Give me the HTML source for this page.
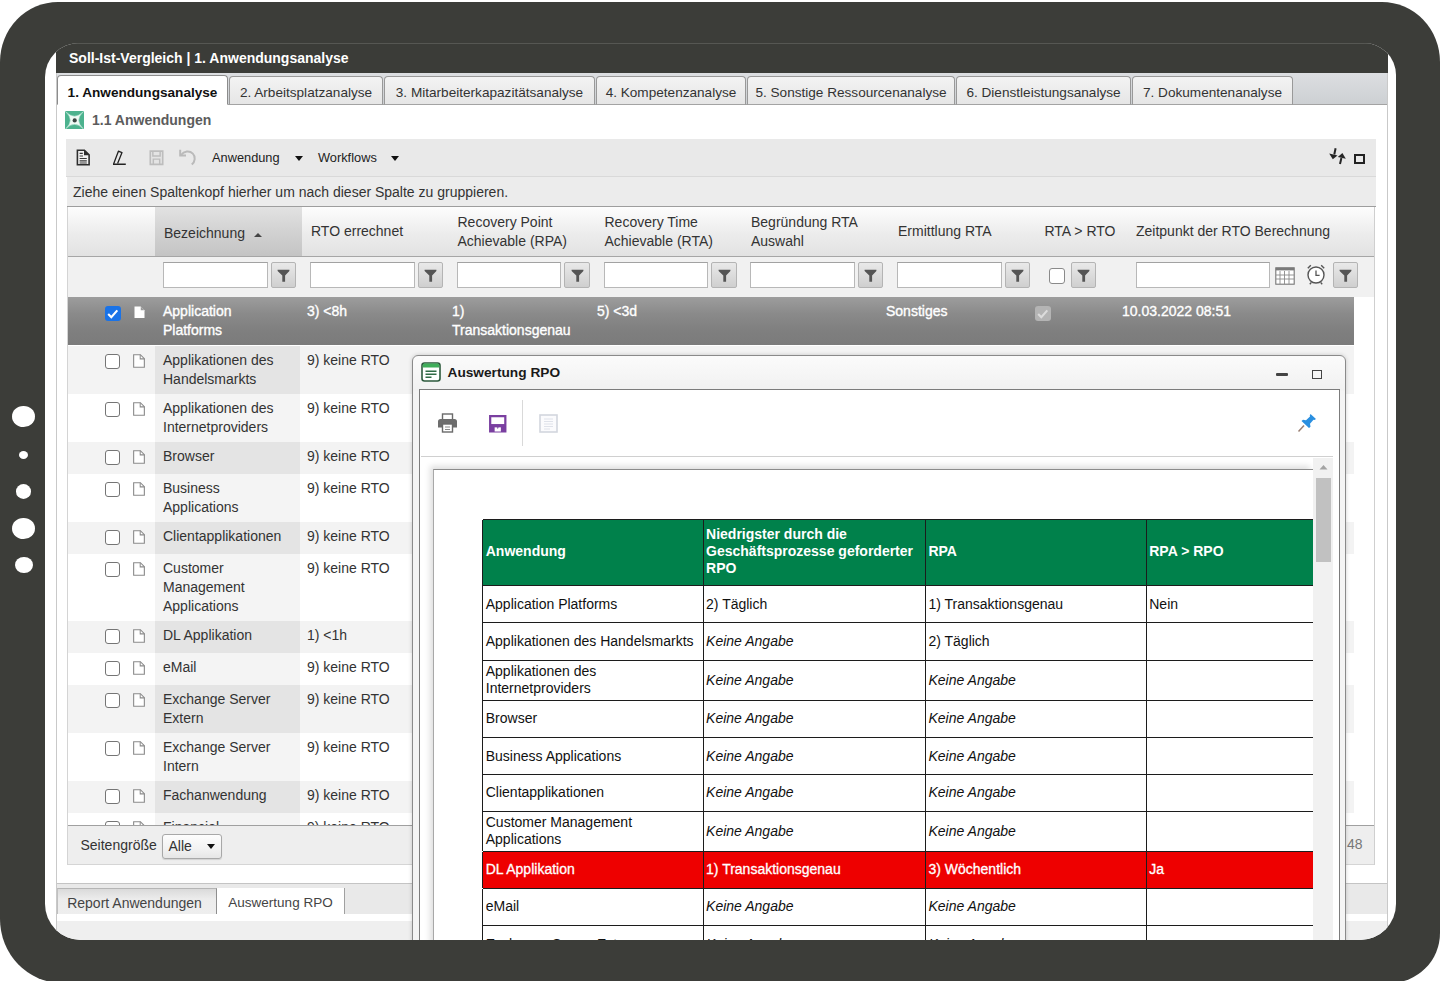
<!DOCTYPE html>
<html>
<head>
<meta charset="utf-8">
<title>Soll-Ist-Vergleich</title>
<style>
*{box-sizing:border-box;margin:0;padding:0}
html,body{width:1440px;height:981px;overflow:hidden;background:#fff}
body{font-family:"Liberation Sans",sans-serif;font-size:14px;color:#333;position:relative}
.abs{position:absolute}
.frame{position:absolute;left:0;top:2px;width:1440px;height:981px;background:#3c3d39;border-radius:58px 58px 50px 62px / 60px 60px 50px 64px}
.dot{position:absolute;background:#fff;border-radius:50%}
.screen{position:absolute;left:45px;top:43px;width:1351px;height:896.500px;background:#fff;border-radius:34px 32px 36px 36px;overflow:hidden}
.in{position:absolute;left:-45px;top:-43px;width:1440px;height:981px}
.titlebar{left:56px;top:43px;width:1332px;height:30px;background:#3b3c38;border-top:1px solid #565753;color:#fff;font-weight:bold;font-size:14px;line-height:29px;padding-left:13px;white-space:nowrap}
.tabstrip{left:56px;top:73px;width:1332px;height:32px;background:linear-gradient(#dcdee1,#cdd0d3);border-bottom:1px solid #a3a3a3}
.tab{position:absolute;top:76px;height:29px;border:1px solid #999;border-bottom:1px solid #a3a3a3;border-radius:4px 4px 0 0;background:linear-gradient(#f3f3f3,#e6e6e6);font-size:13.6px;line-height:32px;text-align:center;color:#333;white-space:nowrap;letter-spacing:0}
.tab.act{top:75px;height:30px;line-height:34px;background:#fff;border-color:#8c8c8c;border-bottom:1px solid #fff;font-weight:bold;color:#111}

.sechead{left:92px;top:110px;font-size:14px;font-weight:bold;color:#5c5c5c;line-height:20px;white-space:nowrap}
.toolbar{left:66px;top:139px;width:1310px;height:38px;background:#e9e9e9;border-bottom:1px solid #d9d9d9}
.tbtxt{top:149px;font-size:12.8px;line-height:18px;color:#222;white-space:nowrap}
.caret{width:0;height:0;border-left:4.5px solid transparent;border-right:4.5px solid transparent;border-top:5px solid #111}
.grouppanel{left:67px;top:177px;width:1309px;height:30px;background:#ececec;border-bottom:1px solid #9e9e9e;font-size:14px;line-height:30px;color:#333;padding-left:6px;white-space:nowrap}
.ghead{left:67px;top:207px;width:1307px;height:50px;background:linear-gradient(#fdfdfd,#ececec 55%,#e2e2e2);border-bottom:1px solid #a6a6a6}
.gsorted{left:155px;top:207px;width:147px;height:49px;background:linear-gradient(#e2e2e2,#d2d2d2 50%,#c4c4c4)}
.hc{position:absolute;font-size:14px;line-height:19px;color:#333;white-space:nowrap}
.gfilter{left:67px;top:257px;width:1307px;height:40px;background:#f1f1f1}
.fin{position:absolute;top:262px;height:26px;width:104.5px;background:#fff;border:1px solid #b8b8b8;border-top-color:#a2a2a2}
.fbtn{position:absolute;top:262px;height:25.5px;width:25.5px;background:linear-gradient(#e9e9e9,#cfcfcf);border:1px solid #b4b4b4;border-radius:2px}
.fbtn svg{position:absolute;left:5.5px;top:6px}

.row{position:absolute;left:67px;width:1287px}
.row.alt{background:#f3f3f3}
.row .sc{position:absolute;left:88px;top:0;bottom:0;width:145px;background:rgba(0,0,0,0.045)}
.row.alt .sc{background:rgba(0,0,0,0.06)}
.ct{position:absolute;top:5px;font-size:14px;line-height:19px;color:#333;white-space:nowrap}
.cb{position:absolute;left:38px;top:8px;width:15px;height:15px;background:#fff;border:1.500px solid #757575;border-radius:3px}
.di{position:absolute;left:66px;top:8px}
.row.sel{background:linear-gradient(#9d9d9d,#8a8a8a 35%,#7f7f7f 70%,#7b7b7b)}
.row.sel .ct{color:#fff;-webkit-text-stroke:0.35px #fff}
.pager{left:67px;top:825px;width:1307px;height:40px;background:#eeeeee;border-top:1.500px solid #a0a0a0;border-bottom:1px solid #d5d5d5}
.btabs{left:56px;top:883px;width:1332px;height:35px;background:#e9e9e9;border-top:1px solid #c4c4c4}
.btab{position:absolute;top:888px;height:26px;font-size:14px;line-height:29px;color:#444;text-align:center;white-space:nowrap}

.popup{left:411.700px;top:355px;width:934.800px;height:620px;background:linear-gradient(#fbfbfb,#f1f1f1 34px,#f4f4f4 35px);border:1.500px solid #8a8a8a;border-radius:6px 6px 0 0;box-shadow:0 0 4px rgba(0,0,0,0.18)}
.pinner{left:418.800px;top:388.500px;width:921.200px;height:580px;background:#fff;border:1.500px solid #7c7c7c}
.ptitle{left:447.500px;top:362.5px;font-size:13.7px;font-weight:bold;color:#1a1a1a;line-height:20px;white-space:nowrap}
.rt{position:absolute;left:483px;width:829.700px;font-size:14px;line-height:16.800px;color:#111}
.rr{position:absolute;left:0;width:100%;border-top:1.500px solid #1c1c1c}
.rc{position:absolute;top:0;bottom:0;border-left:1.500px solid #1c1c1c;display:flex;align-items:center;padding-left:2.500px;padding-bottom:1px;white-space:nowrap}
.rhead .rc{padding-bottom:3px}
.rc i{font-style:italic}
.rhead{background:#00814b;color:#fff;font-weight:bold}
.rred{background:#ee0000;color:#fff}
.rred .rc{-webkit-text-stroke:0.300px #fff}
</style>
</head>
<body>
<div class="frame"></div>
<div class="dot" style="left:12px;top:405.5px;width:23px;height:21.5px"></div>
<div class="dot" style="left:18.5px;top:450.5px;width:9px;height:8px"></div>
<div class="dot" style="left:15.5px;top:483.5px;width:15.5px;height:15px"></div>
<div class="dot" style="left:12px;top:517.5px;width:23px;height:21.5px"></div>
<div class="dot" style="left:15px;top:556.5px;width:18px;height:16.5px"></div>
<div class="screen"><div class="in">

<div class="abs titlebar">Soll-Ist-Vergleich | 1. Anwendungsanalyse</div>
<div class="abs tabstrip"></div>
<div class="tab act" style="left:57px;width:171px">1. Anwendungsanalyse</div>
<div class="tab" style="left:229px;width:154px">2. Arbeitsplatzanalyse</div>
<div class="tab" style="left:384px;width:211px">3. Mitarbeiterkapazitätsanalyse</div>
<div class="tab" style="left:596px;width:150px">4. Kompetenzanalyse</div>
<div class="tab" style="left:747px;width:208px">5. Sonstige Ressourcenanalyse</div>
<div class="tab" style="left:956px;width:175px">6. Dienstleistungsanalyse</div>
<div class="tab" style="left:1132px;width:161px">7. Dokumentenanalyse</div>

<svg class="abs" style="left:65px;top:110.500px" width="19" height="18.500" viewBox="0 0 19 18.500"><rect width="19" height="18.500" rx="1.200" fill="#4cb28e"/><path d="M0.800 0.800 Q9.500 9.600 18.200 0.800 Q9.200 9.250 18.200 17.700 Q9.500 8.900 0.800 17.700 Q9.800 9.250 0.800 0.800z" fill="#effaf5" stroke="#bfe8d8" stroke-width="0.600"/><circle cx="9.700" cy="9.400" r="2.100" fill="#3a4642"/></svg>
<div class="abs sechead">1.1 Anwendungen</div>
<div class="abs toolbar"></div>
<svg class="abs" style="left:76px;top:149px" width="15" height="17" viewBox="0 0 15 17"><path d="M1.400 1.200h7l4.700 4.600v10h-11.700z" fill="#f2f2f2" stroke="#2e2e2e" stroke-width="1.600"/><path d="M8 1v5.200h5.200z" fill="#2e2e2e"/><path d="M3.600 4.300h3.200M3.600 7h3.400M3.600 9.500h7.200M3.600 11.800h7.200M3.600 14h7.200" stroke="#3a3a3a" stroke-width="1.200"/></svg>
<svg class="abs" style="left:111px;top:149px" width="16" height="17" viewBox="0 0 16 17"><path d="M2 15.300h12.800" stroke="#222" stroke-width="1.500"/><path d="M2.600 15l4.800-12.800 3.600 1.400-4.400 11" fill="none" stroke="#222" stroke-width="1.300" stroke-linejoin="round"/></svg>
<svg class="abs" style="left:149.300px;top:150px" width="15" height="15.500" viewBox="0 0 16 17"><path d="M1.200 1.200h13.600v14.600h-13.600z" fill="#e4e4e4" stroke="#bdbdbd" stroke-width="1.800"/><path d="M4 1.500v5h8v-5M4.500 15.500v-5.500h7v5.500" fill="none" stroke="#bdbdbd" stroke-width="1.600"/></svg>
<svg class="abs" style="left:178px;top:148px" width="19" height="18" viewBox="0 0 19 18"><path d="M2.200 1.800v5.800h5.800" fill="none" stroke="#bababa" stroke-width="2"/><path d="M3 7c3-4 8.600-4.600 11.800-1.400 3 3 2.400 7.800-1 11" fill="none" stroke="#bababa" stroke-width="2"/></svg>
<div class="abs tbtxt" style="left:212px">Anwendung</div><div class="abs caret" style="left:294.5px;top:155.500px"></div>
<div class="abs tbtxt" style="left:318px">Workflows</div><div class="abs caret" style="left:390.500px;top:155.500px"></div>
<svg class="abs" style="left:1328px;top:147px" width="19" height="18" viewBox="0 0 19 18"><path d="M7.600 1.300L6.300 7.500" stroke="#262626" stroke-width="2"/><path d="M1.200 6.600l8.300 1.800-4.700 3.800z" fill="#262626"/><path d="M12 17l1.400-6" stroke="#262626" stroke-width="2"/><path d="M9.800 10l8 1.700-3.400-5.700z" fill="#262626"/></svg>
<div class="abs" style="left:1354px;top:154px;width:10.500px;height:9.500px;border:2px solid #222;border-top-width:2.500px"></div>
<div class="abs grouppanel">Ziehe einen Spaltenkopf hierher um nach dieser Spalte zu gruppieren.</div>
<div class="abs ghead"></div><div class="abs gsorted"></div>
<div class="hc" style="left:164px;top:223.500px">Bezeichnung</div>
<div class="abs" style="left:253.500px;top:232.500px;width:0;height:0;border-left:4.500px solid transparent;border-right:4.500px solid transparent;border-bottom:4.500px solid #444"></div>
<div class="hc" style="left:311px;top:222px">RTO errechnet</div>
<div class="hc" style="left:457.500px;top:212.500px">Recovery Point<br>Achievable (RPA)</div>
<div class="hc" style="left:604.500px;top:212.500px">Recovery Time<br>Achievable (RTA)</div>
<div class="hc" style="left:751px;top:212.500px">Begründung RTA<br>Auswahl</div>
<div class="hc" style="left:898px;top:222px">Ermittlung RTA</div>
<div class="hc" style="left:1044.500px;top:222px">RTA &gt; RTO</div>
<div class="hc" style="left:1136px;top:222px">Zeitpunkt der RTO Berechnung</div>
<div class="abs gfilter"></div>
<div class="fin" style="left:163.3px"></div><div class="fbtn" style="left:270.8px"><svg width="13" height="13" viewBox="0 0 13 13"><path d="M0.600 0.800h11.800v1.200l-4.300 4.600v6.200h-2.800v-6.200l-4.700-4.600z" fill="#555"/></svg></div>
<div class="fin" style="left:310.1px"></div><div class="fbtn" style="left:417.6px"><svg width="13" height="13" viewBox="0 0 13 13"><path d="M0.600 0.800h11.800v1.200l-4.300 4.600v6.200h-2.800v-6.200l-4.700-4.600z" fill="#555"/></svg></div>
<div class="fin" style="left:456.8px"></div><div class="fbtn" style="left:564.3px"><svg width="13" height="13" viewBox="0 0 13 13"><path d="M0.600 0.800h11.800v1.200l-4.300 4.600v6.200h-2.800v-6.200l-4.700-4.600z" fill="#555"/></svg></div>
<div class="fin" style="left:603.5px"></div><div class="fbtn" style="left:711.0px"><svg width="13" height="13" viewBox="0 0 13 13"><path d="M0.600 0.800h11.800v1.200l-4.300 4.600v6.200h-2.800v-6.200l-4.700-4.600z" fill="#555"/></svg></div>
<div class="fin" style="left:750.3px"></div><div class="fbtn" style="left:857.8px"><svg width="13" height="13" viewBox="0 0 13 13"><path d="M0.600 0.800h11.800v1.200l-4.300 4.600v6.200h-2.800v-6.200l-4.700-4.600z" fill="#555"/></svg></div>
<div class="fin" style="left:897.0px"></div><div class="fbtn" style="left:1004.5px"><svg width="13" height="13" viewBox="0 0 13 13"><path d="M0.600 0.800h11.800v1.200l-4.300 4.600v6.200h-2.800v-6.200l-4.700-4.600z" fill="#555"/></svg></div>
<div class="abs" style="left:1049px;top:268px;width:16px;height:16px;background:#fff;border:1.500px solid #8a8a8a;border-radius:3px"></div>
<div class="fbtn" style="left:1070.500px"><svg width="13" height="13" viewBox="0 0 13 13"><path d="M0.600 0.800h11.800v1.200l-4.300 4.600v6.200h-2.800v-6.200l-4.700-4.600z" fill="#555"/></svg></div>
<div class="fin" style="left:1136px;width:133.500px"></div>
<svg class="abs" style="left:1275px;top:267px" width="20" height="18" viewBox="0 0 20 18"><rect x="0.800" y="0.800" width="18.400" height="16.400" fill="#fff" stroke="#777" stroke-width="1.100"/><rect x="0.800" y="0.800" width="18.400" height="2.600" fill="#7a7a7a"/><path d="M5 4v13M9.500 4v13M14 4v13M1 8h18M1 12h18" stroke="#8a8a8a" stroke-width="0.900"/></svg>
<svg class="abs" style="left:1305px;top:263px" width="22" height="23" viewBox="0 0 22 23"><circle cx="11" cy="12" r="8" fill="#fff" stroke="#555" stroke-width="1.400"/><path d="M11 7.500v4.800h3.600" fill="none" stroke="#555" stroke-width="1.300"/><path d="M2.800 5.200l3-3M19.200 5.200l-3-3M4.800 21.200l1.600-1.800M17.200 21.200l-1.600-1.800" stroke="#555" stroke-width="1.400"/></svg>
<div class="fbtn" style="left:1332.500px"><svg width="13" height="13" viewBox="0 0 13 13"><path d="M0.600 0.800h11.800v1.200l-4.300 4.600v6.200h-2.800v-6.200l-4.700-4.600z" fill="#555"/></svg></div>
<div class="abs" style="left:67px;top:297px;width:1287px;height:528px;overflow:hidden"><div class="abs" style="left:-67px;top:-297px">
<div class="row sel" style="top:297px;height:48px"><div class="abs" style="left:38px;top:8.500px;width:15.500px;height:15.500px;background:#1a73e8;border-radius:3px"><svg width="15.500" height="15.500" viewBox="0 0 16 16" style="display:block"><path d="M3.300 8.300l3.200 3.200 6.200-7" fill="none" stroke="#fff" stroke-width="2.200"/></svg></div><svg class="di" width="11" height="12.500" viewBox="0 0 13 15" style="top:9px;left:66.500px"><path d="M0.500 0.500h7.500l4.500 4.500v9.500h-12z" fill="#fff"/><path d="M8 0.500v4.500h4.500z" fill="#9a9a9a"/></svg>
<div class="ct" style="left:96px">Application<br>Platforms</div><div class="ct" style="left:240px">3) &lt;8h</div><div class="ct" style="left:385px">1)<br>Transaktionsgenau</div><div class="ct" style="left:530px">5) &lt;3d</div><div class="ct" style="left:819px">Sonstiges</div>
<div class="abs" style="left:968px;top:8.500px;width:15.500px;height:15.500px;background:#b4b4b4;border-radius:3px"><svg width="15.500" height="15.500" viewBox="0 0 16 16" style="display:block"><path d="M3.300 8.300l3.200 3.200 6.200-7" fill="none" stroke="#dcdcdc" stroke-width="2.200"/></svg></div>
<div class="ct" style="left:1055px">10.03.2022 08:51</div></div>
<div class="row alt" style="top:346px;height:48px"><div class="sc"></div><div class="cb"></div><svg class="di" width="12" height="14" viewBox="0 0 13 15"><path d="M0.700 0.700h7.300l4.300 4.300v9.300h-11.600z" fill="#fff" stroke="#8a8a8a" stroke-width="1.200"/><path d="M7.800 0.700v4.500h4.500" fill="none" stroke="#8a8a8a" stroke-width="1.100"/></svg><div class="ct" style="left:96px">Applikationen des<br>Handelsmarkts</div><div class="ct" style="left:240px">9) keine RTO</div></div>
<div class="row " style="top:394px;height:48px"><div class="sc"></div><div class="cb"></div><svg class="di" width="12" height="14" viewBox="0 0 13 15"><path d="M0.700 0.700h7.300l4.300 4.300v9.300h-11.600z" fill="#fff" stroke="#8a8a8a" stroke-width="1.200"/><path d="M7.800 0.700v4.500h4.500" fill="none" stroke="#8a8a8a" stroke-width="1.100"/></svg><div class="ct" style="left:96px">Applikationen des<br>Internetproviders</div><div class="ct" style="left:240px">9) keine RTO</div></div>
<div class="row alt" style="top:442px;height:32px"><div class="sc"></div><div class="cb"></div><svg class="di" width="12" height="14" viewBox="0 0 13 15"><path d="M0.700 0.700h7.300l4.300 4.300v9.300h-11.600z" fill="#fff" stroke="#8a8a8a" stroke-width="1.200"/><path d="M7.800 0.700v4.500h4.500" fill="none" stroke="#8a8a8a" stroke-width="1.100"/></svg><div class="ct" style="left:96px">Browser</div><div class="ct" style="left:240px">9) keine RTO</div></div>
<div class="row " style="top:474px;height:48px"><div class="sc"></div><div class="cb"></div><svg class="di" width="12" height="14" viewBox="0 0 13 15"><path d="M0.700 0.700h7.300l4.300 4.300v9.300h-11.600z" fill="#fff" stroke="#8a8a8a" stroke-width="1.200"/><path d="M7.800 0.700v4.500h4.500" fill="none" stroke="#8a8a8a" stroke-width="1.100"/></svg><div class="ct" style="left:96px">Business<br>Applications</div><div class="ct" style="left:240px">9) keine RTO</div></div>
<div class="row alt" style="top:522px;height:32px"><div class="sc"></div><div class="cb"></div><svg class="di" width="12" height="14" viewBox="0 0 13 15"><path d="M0.700 0.700h7.300l4.300 4.300v9.300h-11.600z" fill="#fff" stroke="#8a8a8a" stroke-width="1.200"/><path d="M7.800 0.700v4.500h4.500" fill="none" stroke="#8a8a8a" stroke-width="1.100"/></svg><div class="ct" style="left:96px">Clientapplikationen</div><div class="ct" style="left:240px">9) keine RTO</div></div>
<div class="row " style="top:554px;height:67px"><div class="sc"></div><div class="cb"></div><svg class="di" width="12" height="14" viewBox="0 0 13 15"><path d="M0.700 0.700h7.300l4.300 4.300v9.300h-11.600z" fill="#fff" stroke="#8a8a8a" stroke-width="1.200"/><path d="M7.800 0.700v4.500h4.500" fill="none" stroke="#8a8a8a" stroke-width="1.100"/></svg><div class="ct" style="left:96px">Customer<br>Management<br>Applications</div><div class="ct" style="left:240px">9) keine RTO</div></div>
<div class="row alt" style="top:621px;height:32px"><div class="sc"></div><div class="cb"></div><svg class="di" width="12" height="14" viewBox="0 0 13 15"><path d="M0.700 0.700h7.300l4.300 4.300v9.300h-11.600z" fill="#fff" stroke="#8a8a8a" stroke-width="1.200"/><path d="M7.800 0.700v4.500h4.500" fill="none" stroke="#8a8a8a" stroke-width="1.100"/></svg><div class="ct" style="left:96px">DL Applikation</div><div class="ct" style="left:240px">1) &lt;1h</div></div>
<div class="row " style="top:653px;height:32px"><div class="sc"></div><div class="cb"></div><svg class="di" width="12" height="14" viewBox="0 0 13 15"><path d="M0.700 0.700h7.300l4.300 4.300v9.300h-11.600z" fill="#fff" stroke="#8a8a8a" stroke-width="1.200"/><path d="M7.800 0.700v4.500h4.500" fill="none" stroke="#8a8a8a" stroke-width="1.100"/></svg><div class="ct" style="left:96px">eMail</div><div class="ct" style="left:240px">9) keine RTO</div></div>
<div class="row alt" style="top:685px;height:48px"><div class="sc"></div><div class="cb"></div><svg class="di" width="12" height="14" viewBox="0 0 13 15"><path d="M0.700 0.700h7.300l4.300 4.300v9.300h-11.600z" fill="#fff" stroke="#8a8a8a" stroke-width="1.200"/><path d="M7.800 0.700v4.500h4.500" fill="none" stroke="#8a8a8a" stroke-width="1.100"/></svg><div class="ct" style="left:96px">Exchange Server<br>Extern</div><div class="ct" style="left:240px">9) keine RTO</div></div>
<div class="row " style="top:733px;height:48px"><div class="sc"></div><div class="cb"></div><svg class="di" width="12" height="14" viewBox="0 0 13 15"><path d="M0.700 0.700h7.300l4.300 4.300v9.300h-11.600z" fill="#fff" stroke="#8a8a8a" stroke-width="1.200"/><path d="M7.800 0.700v4.500h4.500" fill="none" stroke="#8a8a8a" stroke-width="1.100"/></svg><div class="ct" style="left:96px">Exchange Server<br>Intern</div><div class="ct" style="left:240px">9) keine RTO</div></div>
<div class="row alt" style="top:781px;height:32px"><div class="sc"></div><div class="cb"></div><svg class="di" width="12" height="14" viewBox="0 0 13 15"><path d="M0.700 0.700h7.300l4.300 4.300v9.300h-11.600z" fill="#fff" stroke="#8a8a8a" stroke-width="1.200"/><path d="M7.800 0.700v4.500h4.500" fill="none" stroke="#8a8a8a" stroke-width="1.100"/></svg><div class="ct" style="left:96px">Fachanwendung</div><div class="ct" style="left:240px">9) keine RTO</div></div>
<div class="row " style="top:813px;height:48px"><div class="sc"></div><div class="cb"></div><svg class="di" width="12" height="14" viewBox="0 0 13 15"><path d="M0.700 0.700h7.300l4.300 4.300v9.300h-11.600z" fill="#fff" stroke="#8a8a8a" stroke-width="1.200"/><path d="M7.800 0.700v4.500h4.500" fill="none" stroke="#8a8a8a" stroke-width="1.100"/></svg><div class="ct" style="left:96px">Financial<br>Applications</div><div class="ct" style="left:240px">9) keine RTO</div></div>
</div></div>
<div class="abs pager"></div>
<div class="abs" style="left:80.500px;top:835.500px;font-size:14px;line-height:19px;color:#333">Seitengröße</div>
<div class="abs" style="left:162px;top:833.500px;width:59.500px;height:25px;background:linear-gradient(#fdfdfd,#f2f2f2 60%,#e6e6e6);border:1px solid #a8a8a8;border-radius:3px;box-shadow:0 1px 1px rgba(0,0,0,0.12);font-size:14px;line-height:23px;padding-left:5.500px;color:#333">Alle<div class="abs caret" style="left:43.500px;top:9px"></div></div>
<div class="abs" style="left:1347px;top:835px;font-size:14px;line-height:19px;color:#777">48</div>
<div class="abs btabs"></div>
<div class="abs" style="left:56px;top:914px;width:1332px;height:7px;background:#fff"></div>
<div class="abs" style="left:56px;top:921px;width:1332px;height:20px;background:#efefef"></div>
<div class="btab" style="left:57px;width:160px;background:linear-gradient(#dadada,#ececec 40%,#eeeeee);border-right:1.500px solid #8e8e8e;border-top:1px solid #b5b5b5;border-left:1px solid #c0c0c0;text-indent:-5px">Report Anwendungen</div>
<div class="btab" style="left:217px;width:128px;background:#fff;border-right:1.500px solid #a0a0a0;top:888px;height:26px;font-size:13.5px;line-height:30px">Auswertung RPO</div>
<div class="abs" style="left:56px;top:73px;width:1px;height:870px;background:#c9c9c9"></div>
<div class="abs" style="left:1387px;top:73px;width:1px;height:870px;background:#c9c9c9"></div>
<div class="abs" style="left:1374px;top:207px;width:1px;height:658px;background:#cfcfcf"></div>
<div class="abs" style="left:66.500px;top:207px;width:1px;height:658px;background:#d4d4d4"></div>
<div class="abs popup"></div><div class="abs pinner"></div>
<svg class="abs" style="left:421px;top:362px" width="20" height="20" viewBox="0 0 20 20"><rect x="1" y="1" width="18" height="18" rx="2.500" fill="#fff" stroke="#2d5a3d" stroke-width="1.600"/><path d="M1.800 3.200a1.600 1.600 0 0 1 1.600-1.600h13.200a1.600 1.600 0 0 1 1.600 1.600v2.300h-16.400z" fill="#3fae5a"/><path d="M4.500 9.200h11M4.500 12.200h11M4.500 15.200h6" stroke="#2f6b45" stroke-width="1.500"/></svg>
<div class="abs ptitle">Auswertung RPO</div>
<div class="abs" style="left:1276px;top:373px;width:11.500px;height:3px;background:#444;border-radius:1px"></div>
<div class="abs" style="left:1312px;top:369.500px;width:10px;height:9.500px;border:1.800px solid #444"></div>
<svg class="abs" style="left:437px;top:413px" width="21" height="20" viewBox="0 0 21 20"><rect x="5.500" y="1" width="10" height="6" fill="#fff" stroke="#6a6a6a" stroke-width="1.400"/><path d="M1 8.500a2.500 2.500 0 0 1 2.500-2.500h14a2.500 2.500 0 0 1 2.500 2.500v6h-19z" fill="#6d6d6d"/><rect x="5.500" y="11" width="10" height="8" fill="#fff" stroke="#6a6a6a" stroke-width="1.400"/><path d="M8 14h5M8 16.500h5" stroke="#8a8a8a" stroke-width="1"/></svg>
<svg class="abs" style="left:489px;top:415px" width="17.500" height="17.500" viewBox="0 0 18 18"><path d="M1.200 1.200h15.600v15.600h-15.600z" fill="#fff" stroke="#7a3fa0" stroke-width="2.300"/><path d="M1.200 9.300h15.600v7.500h-15.600z" fill="#7a3fa0"/><path d="M5.800 17v-4.300h6.400v4.300" fill="#fff"/><path d="M8 12.700h2l-1 1.600z" fill="#7a3fa0"/></svg>
<div class="abs" style="left:522px;top:400px;width:1px;height:46px;background:#d9d9d9"></div>
<svg class="abs" style="left:539px;top:413.500px" width="19" height="19" viewBox="0 0 19 19"><rect x="1" y="1" width="17" height="17" fill="#fbfbfd" stroke="#d3d6de" stroke-width="1.600"/><path d="M5 5h9M5 7.500h9M5 10h9M5 12.500h9M5 15h6" stroke="#dfe2ea" stroke-width="1"/></svg>
<svg class="abs" style="left:1297px;top:413px" width="20" height="20" viewBox="0 0 20 20"><path d="M1.500 18.500l5.500-6" stroke="#9a7f72" stroke-width="1.500"/><path d="M13.500 1l5.500 5-1.500 1-1-.300-3.500 4 .500 3-1.500 1.300-7.500-7 1.500-1.300 3 .500 4-3.700-.200-1.200z" fill="#2a8fe0"/></svg>
<div class="abs" style="left:420.500px;top:455.600px;width:912px;height:1.200px;background:#d0d0d0"></div>

<div class="abs" style="left:433px;top:469px;width:880px;height:480px;background:#fff;border-top:1.500px solid #8c8c8c;border-left:1.500px solid #a8a8a8;box-shadow:-3px -3px 6px rgba(0,0,0,0.13)"></div>
<div class="abs" style="left:1313px;top:457.500px;width:19.500px;height:490px;background:#f1f1f1"></div>

<svg class="abs" style="left:1319px;top:463.500px" width="9" height="6" viewBox="0 0 9 6"><path d="M0.500 5.500l4-4.500 4 4.500z" fill="#a3a3a3"/></svg>
<div class="abs" style="left:1316px;top:477.500px;width:14.500px;height:84.500px;background:#c1c1c1"></div>
<div class="rt" style="top:0;height:981px">
<div class="rr rhead" style="top:519.35px;height:66.25px">
<div class="rc" style="left:-0.75px;width:221.05px"><span>Anwendung</span></div>
<div class="rc" style="left:219.55px;width:223.15px"><span>Niedrigster durch die<br>Geschäftsprozesse geforderter<br>RPO</span></div>
<div class="rc" style="left:441.95px;width:221.55px"><span>RPA</span></div>
<div class="rc" style="left:662.75px;width:167.75px"><span>RPA &gt; RPO</span></div>
</div>
<div class="rr " style="top:584.85px;height:38.25px">
<div class="rc" style="left:-0.75px;width:221.05px"><span>Application Platforms</span></div>
<div class="rc" style="left:219.55px;width:223.15px"><span>2) Täglich</span></div>
<div class="rc" style="left:441.95px;width:221.55px"><span>1) Transaktionsgenau</span></div>
<div class="rc" style="left:662.75px;width:167.75px"><span>Nein</span></div>
</div>
<div class="rr " style="top:622.35px;height:38.25px">
<div class="rc" style="left:-0.75px;width:221.05px"><span>Applikationen des Handelsmarkts</span></div>
<div class="rc" style="left:219.55px;width:223.15px"><span><i>Keine Angabe</i></span></div>
<div class="rc" style="left:441.95px;width:221.55px"><span>2) Täglich</span></div>
<div class="rc" style="left:662.75px;width:167.75px"><span></span></div>
</div>
<div class="rr " style="top:659.85px;height:40.75px">
<div class="rc" style="left:-0.75px;width:221.05px"><span>Applikationen des<br>Internetproviders</span></div>
<div class="rc" style="left:219.55px;width:223.15px"><span><i>Keine Angabe</i></span></div>
<div class="rc" style="left:441.95px;width:221.55px"><span><i>Keine Angabe</i></span></div>
<div class="rc" style="left:662.75px;width:167.75px"><span></span></div>
</div>
<div class="rr " style="top:699.85px;height:38.05px">
<div class="rc" style="left:-0.75px;width:221.05px"><span>Browser</span></div>
<div class="rc" style="left:219.55px;width:223.15px"><span><i>Keine Angabe</i></span></div>
<div class="rc" style="left:441.95px;width:221.55px"><span><i>Keine Angabe</i></span></div>
<div class="rc" style="left:662.75px;width:167.75px"><span></span></div>
</div>
<div class="rr " style="top:737.15px;height:37.75px">
<div class="rc" style="left:-0.75px;width:221.05px"><span>Business Applications</span></div>
<div class="rc" style="left:219.55px;width:223.15px"><span><i>Keine Angabe</i></span></div>
<div class="rc" style="left:441.95px;width:221.55px"><span><i>Keine Angabe</i></span></div>
<div class="rc" style="left:662.75px;width:167.75px"><span></span></div>
</div>
<div class="rr " style="top:774.15px;height:37.45px">
<div class="rc" style="left:-0.75px;width:221.05px"><span>Clientapplikationen</span></div>
<div class="rc" style="left:219.55px;width:223.15px"><span><i>Keine Angabe</i></span></div>
<div class="rc" style="left:441.95px;width:221.55px"><span><i>Keine Angabe</i></span></div>
<div class="rc" style="left:662.75px;width:167.75px"><span></span></div>
</div>
<div class="rr " style="top:810.85px;height:40.45px">
<div class="rc" style="left:-0.75px;width:221.05px"><span>Customer Management<br>Applications</span></div>
<div class="rc" style="left:219.55px;width:223.15px"><span><i>Keine Angabe</i></span></div>
<div class="rc" style="left:441.95px;width:221.55px"><span><i>Keine Angabe</i></span></div>
<div class="rc" style="left:662.75px;width:167.75px"><span></span></div>
</div>
<div class="rr rred" style="top:850.55px;height:37.75px">
<div class="rc" style="left:-0.75px;width:221.05px"><span>DL Applikation</span></div>
<div class="rc" style="left:219.55px;width:223.15px"><span>1) Transaktionsgenau</span></div>
<div class="rc" style="left:441.95px;width:221.55px"><span>3) Wöchentlich</span></div>
<div class="rc" style="left:662.75px;width:167.75px"><span>Ja</span></div>
</div>
<div class="rr " style="top:887.55px;height:38.05px">
<div class="rc" style="left:-0.75px;width:221.05px"><span>eMail</span></div>
<div class="rc" style="left:219.55px;width:223.15px"><span><i>Keine Angabe</i></span></div>
<div class="rc" style="left:441.95px;width:221.55px"><span><i>Keine Angabe</i></span></div>
<div class="rc" style="left:662.75px;width:167.75px"><span></span></div>
</div>
<div class="rr " style="top:924.85px;height:38.25px">
<div class="rc" style="left:-0.75px;width:221.05px"><span>Exchange Server Extern</span></div>
<div class="rc" style="left:219.55px;width:223.15px"><span><i>Keine Angabe</i></span></div>
<div class="rc" style="left:441.95px;width:221.55px"><span><i>Keine Angabe</i></span></div>
<div class="rc" style="left:662.75px;width:167.75px"><span></span></div>
</div>
</div>
<!--END-->

</div></div>
</body>
</html>
